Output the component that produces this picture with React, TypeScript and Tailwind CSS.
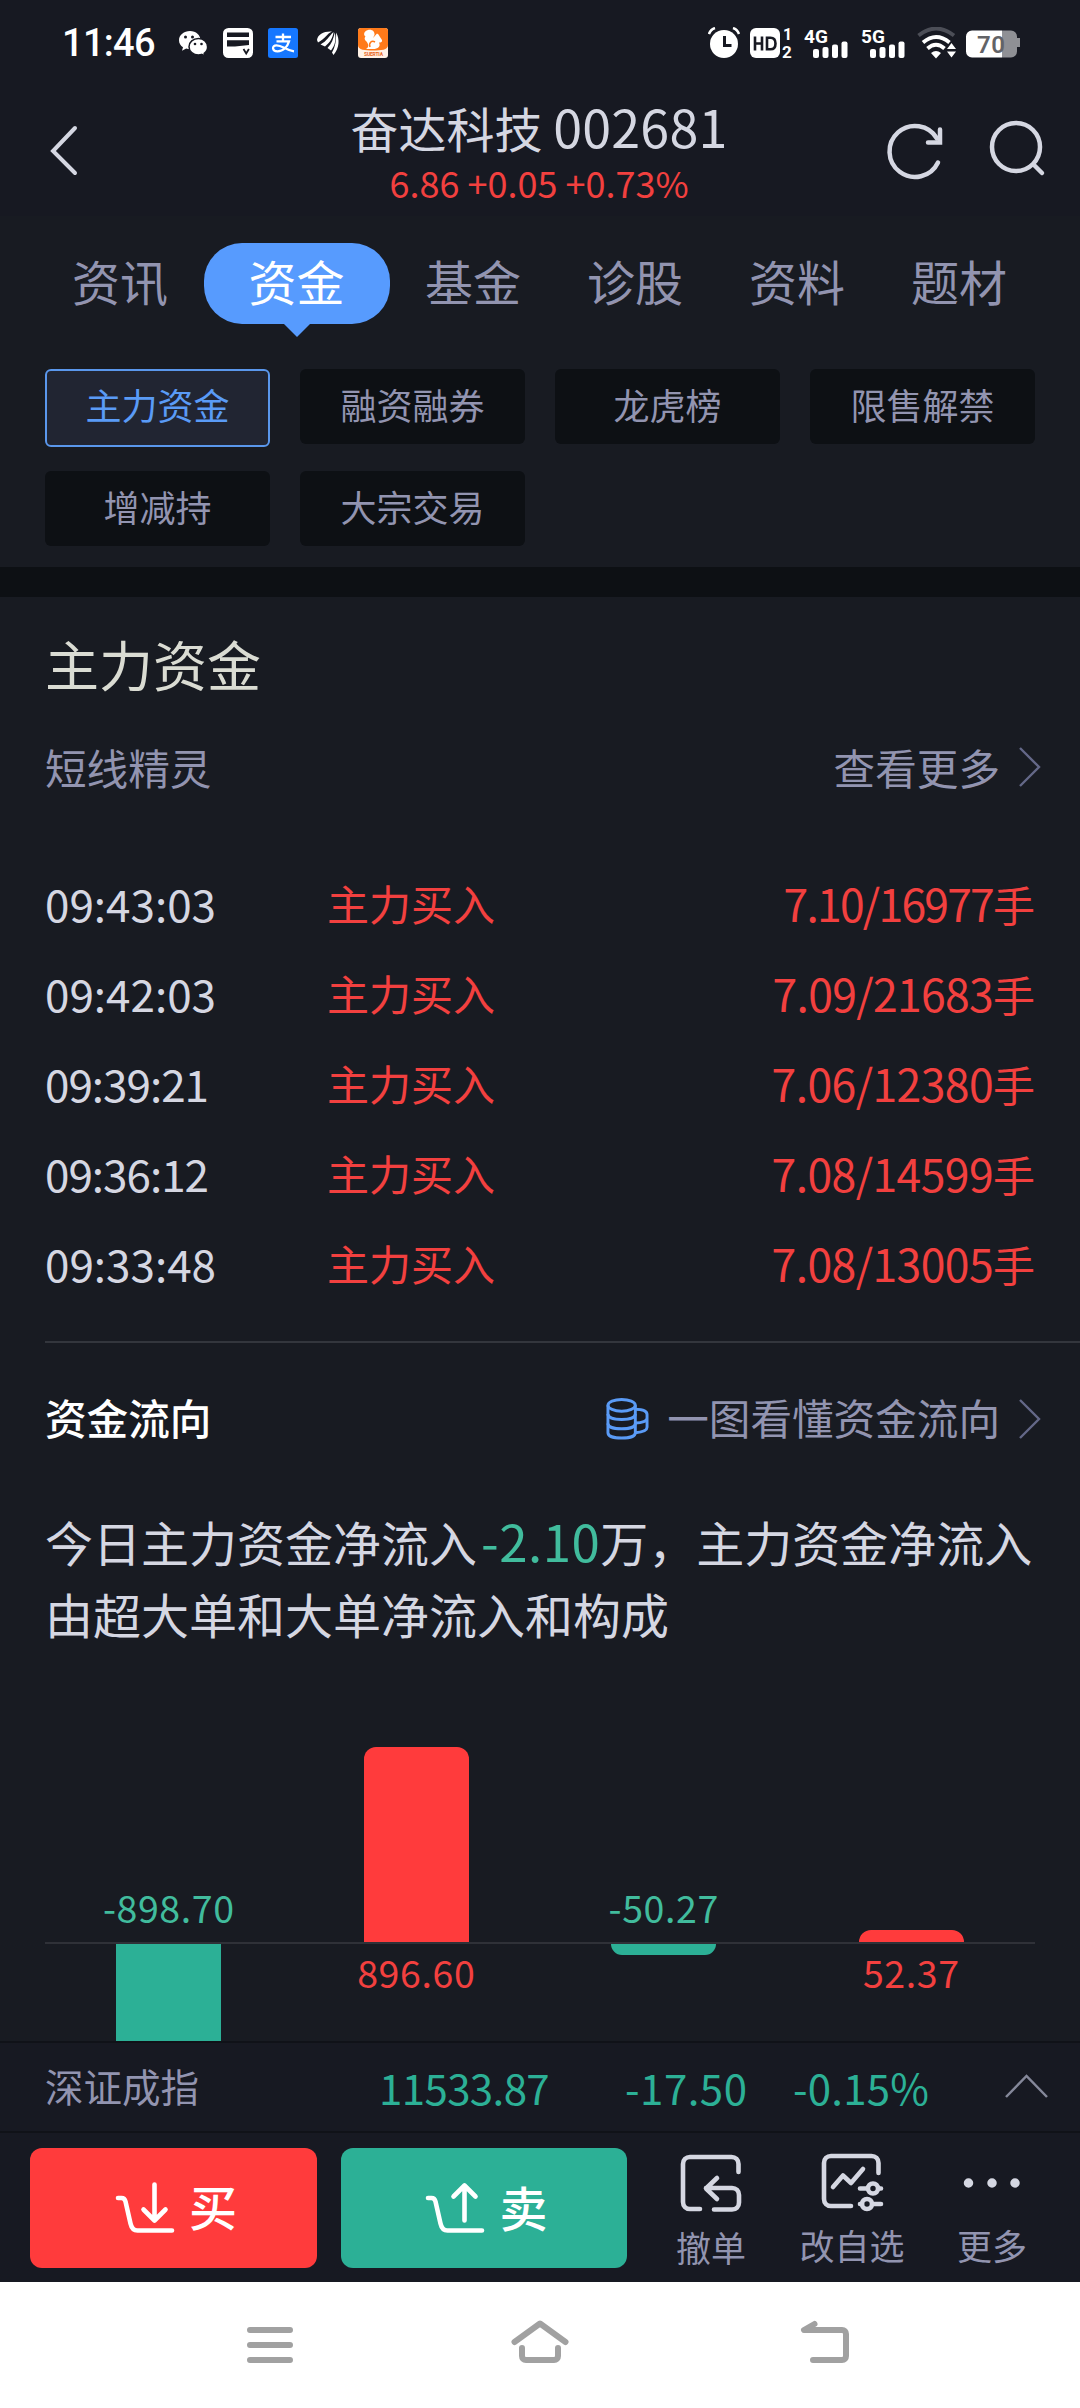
import type { ReactNode } from "react";

type Tone = "up" | "down";

const tabs = ["资讯", "资金", "基金", "诊股", "资料", "题材"];
const filters = ["主力资金", "融资融券", "龙虎榜", "限售解禁", "增减持", "大宗交易"];

const trades = [
  { time: "09:43:03", deal: "7.10/16977", timeSpacing: "", dealSpacing: "tracking-[-1.8px]" },
  { time: "09:42:03", deal: "7.09/21683", timeSpacing: "", dealSpacing: "tracking-[-0.7px]" },
  { time: "09:39:21", deal: "7.06/12380", timeSpacing: "tracking-[-1px]", dealSpacing: "tracking-[-0.6px]" },
  { time: "09:36:12", deal: "7.08/14599", timeSpacing: "tracking-[-1px]", dealSpacing: "tracking-[-0.6px]" },
  { time: "09:33:48", deal: "7.08/13005", timeSpacing: "", dealSpacing: "tracking-[-0.6px]" },
];

const flows: { value: string; height: number; tone: Tone }[] = [
  { value: "-898.70", height: 194, tone: "down" },
  { value: "896.60", height: 195, tone: "up" },
  { value: "-50.27", height: 11, tone: "down" },
  { value: "52.37", height: 12, tone: "up" },
];

function Signal({ label }: { label: string }) {
  return (
    <svg className="font-[Roboto]" width="46" height="40" viewBox="0 -4 46 40" fill="#fff">
      <text x="0" y="15.5" fontSize="19" fontWeight="700" textLength="24">
        {label}
      </text>
      <rect x="9" y="22" width="6" height="9" rx="2" />
      <rect x="18.500" y="20" width="6" height="11" rx="2" />
      <rect x="28" y="17.500" width="6" height="13.500" rx="2" />
      <rect x="37.500" y="14.500" width="6" height="16.500" rx="2" />
    </svg>
  );
}

function StatusBar() {
  return (
    <div className="flex h-[86px] items-center pl-[62px] text-white">
      <span className="w-[117px] font-[Roboto] text-[38px] leading-none font-medium tracking-[-0.7px]">11:46</span>
      {/* WeChat */}
      <svg width="44" height="30" viewBox="0 0 44 30">
        <path d="M11 3C5 3 0 7 0 12.200c0 3 1.600 5.400 4 7l-1 3.600 4.200-2.200c1.200.4 2.500.6 3.800.6 6 0 10.500-4 10.500-9S17 3 11 3z" fill="#fff" />
        <path d="M19.500 10.500c-5.400 0-9.500 3.600-9.500 8.200s4.100 8.200 9.500 8.200c1.100 0 2.200-.2 3.200-.5l3.400 1.800-.9-2.900c2.100-1.500 3.400-3.800 3.400-6.400 0-4.800-3.900-8.400-9.100-8.400z" fill="#fff" stroke="#171922" strokeWidth="1.500" />
        <g fill="#171922">
          <circle cx="6.500" cy="9" r="1.500" />
          <circle cx="13.500" cy="9" r="1.500" />
          <circle cx="16" cy="16" r="1.300" />
          <circle cx="22.500" cy="16" r="1.300" />
        </g>
      </svg>
      {/* Card wallet */}
      <svg width="45" height="30" viewBox="0 0 45 30">
        <rect width="30" height="30" rx="5.500" fill="#fff" />
        <rect x="4" y="4.500" width="22" height="4.500" fill="#171922" />
        <path d="M4 12.300h22v4.700l-14 1.500H4z" fill="#171922" />
        <path d="M20.500 21l2.700 4.500 2.700-4.500" stroke="#171922" strokeWidth="1.800" fill="none" />
      </svg>
      {/* Alipay */}
      <svg width="49" height="30" viewBox="0 0 49 30" fill="none" stroke="#fff" strokeWidth="2.300">
        <rect width="30" height="30" rx="2.500" fill="#1677ff" stroke="none" />
        <path d="M7.500 9h15.500M15 5.500v8M8.500 13.300h12.500c-1.500 5-5.500 10-11.500 10-5.500 0-6-6-1-6 6 0 9 5 17.500 6" />
      </svg>
      {/* Feather */}
      <svg width="41" height="30" viewBox="0 0 41 30" fill="#fff">
        <path d="M0 12C1 6 7 3 15 3.500 10 5.500 8 11 1 14.500z" />
        <path d="M3.500 16.500C10 13 12 8 16.500 4c-.5 6-4 11-8.500 14.500z" />
        <path d="M10.500 20c4-4 6-9 7.200-15.500 1.800 7 .3 13-3.700 18z" />
        <path d="M15 24.500c3-5 4.500-12 4-20C23 11 22.500 20 16.500 27z" />
      </svg>
      {/* UC browser */}
      <svg className="font-[Roboto]" width="350" height="30" viewBox="0 0 350 30">
        <rect width="30" height="30" rx="3" fill="#fff1e6" />
        <path d="M3 0h24a3 3 0 0 1 3 3v14c0 5-7 5.500-15 5.500S0 22 0 17V3a3 3 0 0 1 3-3z" fill="#ff7a1a" />
        <path d="M10 2c4-1 7 1.500 6.500 5L15 10l4-4.500 1.500 1L22 9l2 3c.5 2-1 2.500-3 2.500 2 4-1 6.500-6 6.500H8c3.500-2 2.500-5 .5-7.500C6 11 6.500 10 7.500 8.500 5 7 6 3 10 2z" fill="#fff" />
        <path d="M12 19c-1.500-4 1.500-7 5-5" stroke="#ff7a1a" strokeWidth="1.500" fill="none" />
        <text x="6" y="28" fontSize="5" fontWeight="700" fill="#e8641a" textLength="19">
          SUERTIA
        </text>
      </svg>
      {/* Alarm */}
      <svg width="42" height="32" viewBox="0 0 42 32">
        <circle cx="16" cy="17" r="14" fill="#fff" />
        <path d="M1 7c1-3 3-5 6-6M31 7c-1-3-3-5-6-6" stroke="#fff" strokeWidth="2.500" fill="none" />
        <path d="M16.500 9v9.500h7" stroke="#171922" strokeWidth="3" fill="none" />
      </svg>
      {/* HD dual sim */}
      <svg className="font-[Roboto]" width="54" height="40" viewBox="0 -4 54 40" fill="#fff">
        <rect y="1" width="30" height="30" rx="6" />
        <path d="M5 9.500v14M12 9.500v14M5 16.500h7M17 10.700v11.600h3.500q5 0 5-5.800t-5-5.800z" fill="none" stroke="#171922" strokeWidth="2.600" />
        <text x="33" y="13" fontSize="16" fontWeight="700">1</text>
        <text x="32" y="31" fontSize="17" fontWeight="700">2</text>
      </svg>
      <Signal label="4G" />
      <span className="w-[11px]" />
      <Signal label="5G" />
      <span className="w-[10px]" />
      {/* Wifi */}
      <svg width="49" height="32" viewBox="0 0 49 32" fill="none" strokeWidth="3.800">
        <path d="M1.500 8.500Q19-5.500 37 8.500" stroke="#4c4e57" />
        <path d="M6 15.500Q19 4.500 32.500 15.500M10.500 21.500Q19 14 27.500 21.500" stroke="#fff" />
        <path d="M14 26q5-4 10 0l-5 5.500zM30 22l4.500-6 4.500 6zM30 24.500l4.500 6 4.500-6z" fill="#fff" />
      </svg>
      {/* Battery */}
      <svg className="font-[Roboto]" width="54" height="32" viewBox="0 0 54 32">
        <path d="M36 3.500h9a6 6 0 0 1 6 6v1.500h3v9h-3v4.500a6 6 0 0 1-6 6h-9z" fill="#8f9095" />
        <path d="M6 3.500h30v27H6a6 6 0 0 1-6-6v-15a6 6 0 0 1 6-6z" fill="#fff" />
        <text x="11" y="25.500" fontSize="24" fontWeight="600" fill="#626367" textLength="28">
          70
        </text>
      </svg>
    </div>
  );
}

function Header() {
  return (
    <header className="flex h-[130px] bg-[#171922] text-[#d5d7e2]">
      <svg className="mt-[38px] ml-[49px]" width="30" height="54" viewBox="0 0 30 54" fill="none" stroke="currentColor" strokeWidth="4" strokeLinecap="round">
        <path d="M26 4L4 27l22 22" />
      </svg>
      <div className="ml-[150px] flex w-[620px] flex-col items-center pt-[10px]">
        <h1 className="text-[48px] leading-[60px] whitespace-nowrap">
          奋达科技 <span className="text-[52px] tracking-[0.2px]">002681</span>
        </h1>
        <p className="mt-[5px] text-[36px] leading-10 text-[#f2403f]">6.86 +0.05 +0.73%</p>
      </div>
      <svg className="mt-[34px] ml-[37px]" width="60" height="62" viewBox="0 0 60 62" fill="none" stroke="currentColor" strokeWidth="4.500" strokeLinecap="round">
        <path d="M52 42.500A25.500 25.500 0 1 1 51 18.500" />
        <path d="M54 9.500v13H42" />
      </svg>
      <svg className="mt-[34px] ml-[42px]" width="60" height="62" viewBox="0 0 60 62" fill="none" stroke="currentColor" strokeWidth="4.500" strokeLinecap="round">
        <circle cx="28" cy="27" r="24" />
        <path d="M46 45l8 8" />
      </svg>
    </header>
  );
}

function Tabs() {
  return (
    <nav className="flex h-[126px] pt-[27px] pl-[39px] text-[48px] leading-[75px] text-[#9294b0]">
      {tabs.map((tab) =>
        tab === "资金" ? (
          <div key={tab} className="mx-[2.5px] flex w-[186px] shrink-0 flex-col items-center">
            <span className="h-[81px] w-full rounded-[38px] bg-[#579bfe] text-center text-white">{tab}</span>
            <svg width="26" height="13" viewBox="0 0 26 13" fill="#579bfe">
              <path d="M0 0h26L13 13z" />
            </svg>
          </div>
        ) : (
          <span key={tab} className="w-[162px] shrink-0 text-center">
            {tab}
          </span>
        ),
      )}
    </nav>
  );
}

function Filters() {
  return (
    <div className="grid h-[198px] grid-cols-[repeat(4,225px)] grid-rows-[75px_75px] gap-x-[30px] gap-y-[27px] pt-[27px] pl-[45px] text-center text-[36px] leading-[70px]">
      {filters.map((name, i) => (
        <span
          key={name}
          className={
            i === 0
              ? "h-[78px] rounded-md border-2 border-[#5a97ec] bg-[#212532] leading-[67px] text-[#5a9bf6]"
              : "h-[75px] rounded-md bg-[#0d1014] text-[#9294b0]"
          }
        >
          {name}
        </span>
      ))}
    </div>
  );
}

function Chevron() {
  return (
    <svg className="ml-[18px]" width="24" height="42" viewBox="0 0 24 42" fill="none" stroke="#646888" strokeWidth="2.400">
      <path d="M2 2l19 19L2 40" />
    </svg>
  );
}

function CoinsIcon() {
  return (
    <svg className="mr-[18px]" width="43" height="44" viewBox="0 0 44 44" fill="none" stroke="#5a9bf6" strokeWidth="3">
      <ellipse cx="16" cy="8" rx="14" ry="6" />
      <path d="M2 8v28c0 3.500 6 5.500 14 5.500s14-2 14-5.500V8" />
      <path d="M2 17c0 3.500 6 5.500 14 5.500s14-2 14-5.500M2 26.500c0 3.500 6 5.500 14 5.500s14-2 14-5.500" />
      <path d="M30 12c7 0 12 2 12 5.500v13c0 3-5 5-12 5.500M42 21c0 3-5 5-12 5" />
    </svg>
  );
}

function Trades() {
  return (
    <ul className="pt-[61px] text-[42px] leading-[90px]">
      {trades.map((row) => (
        <li key={row.time} className="flex h-[90px] pr-[45px]">
          <span className={`w-[282px] text-[44px] text-[#d5d7e2] ${row.timeSpacing}`}>{row.time}</span>
          <span className="text-[#f2403f]">主力买入</span>
          <span className="ml-auto text-[#f2403f]">
            <span className={`text-[44.500px] ${row.dealSpacing}`}>{row.deal}</span>手
          </span>
        </li>
      ))}
    </ul>
  );
}

function FlowChart() {
  return (
    <div className="mr-[45px] text-[37.500px] leading-[44px] tracking-[0.6px]">
      <div className="grid h-[295px] grid-cols-4 items-end justify-items-center border-b-2 border-[#2f3138]">
        {flows.map((f) =>
          f.tone === "down" ? (
            <span key={f.value} className="pb-[13px] text-[#41bc9d]">
              {f.value}
            </span>
          ) : (
            <div key={f.value} className="w-[105px] rounded-t-[12px] bg-[#ff3b3c]" style={{ height: f.height }} />
          ),
        )}
      </div>
      <div className="grid grid-cols-4 items-start justify-items-center">
        {flows.map((f) =>
          f.tone === "down" ? (
            <div key={f.value} className="w-[105px] rounded-b-[12px] bg-[#2cb096]" style={{ height: f.height }} />
          ) : (
            <span key={f.value} className="pt-[6px] text-[#f2403f]">
              {f.value}
            </span>
          ),
        )}
      </div>
    </div>
  );
}

function IndexRow() {
  return (
    <div className="flex h-[92px] items-center border-y-2 border-[#101218] pb-[2px] pl-[45px] text-[42px] text-[#2cb096]">
      <span className="w-[334px] text-[38.500px] text-[#9294b0]">深证成指</span>
      <span className="w-[246px] tracking-[-0.6px]">11533.87</span>
      <span className="w-[168px] tracking-[0.5px]">-17.50</span>
      <span className="w-[211px] tracking-[0.2px]">-0.15%</span>
      <svg width="44" height="26" viewBox="0 0 44 26" fill="none" stroke="#85889a" strokeWidth="2.500">
        <path d="M2 24L22.500 3 43 24" />
      </svg>
    </div>
  );
}

function Cart({ arrow }: { arrow: string }) {
  return (
    <svg className="mr-[14px]" width="60" height="52" viewBox="0 0 60 52" fill="none" stroke="#fff" strokeWidth="4.600" strokeLinecap="round" strokeLinejoin="round">
      <path d="M3 16h3.500c2.500 0 3.500 1.500 4 3.500l5 22c1 4.500 3 7 7 7H57" />
      <path d={arrow} />
    </svg>
  );
}

function Action({ label, width, children }: { label: string; width: string; children: ReactNode }) {
  return (
    <div className={`flex flex-col items-center ${width}`}>
      <svg width="66" height="60" viewBox="0 0 66 60" fill="none" stroke="#d5d7e2" strokeWidth="4.600" strokeLinecap="round" strokeLinejoin="round">
        {children}
      </svg>
      <span className="mt-[11px] text-[35px] leading-[44px] whitespace-nowrap text-[#9294b0]">{label}</span>
    </div>
  );
}

function ActionBar() {
  return (
    <div className="flex h-[149px] pt-[15px] pl-[30px] text-[48px] leading-none text-white">
      <div className="flex h-[120px] w-[287px] items-center justify-center rounded-[12px] bg-[#ff3b3c] pl-[5px]">
        <Cart arrow="M39.500 2.500v35M28.500 27.500l11 11 11-11" />
        <span className="pb-[6px] font-medium">买</span>
      </div>
      <div className="ml-[24px] flex h-[120px] w-[286px] items-center justify-center rounded-[12px] bg-[#2cb096] pl-[5px]">
        <Cart arrow="M39.500 38.500v-35M28.500 14.500l11-11 11 11" />
        <span className="pb-[4px] font-medium">卖</span>
      </div>
      <div className="flex pt-[4px] pl-[40px]">
        <div className="pt-[2px]">
          <Action label="撤单" width="w-[88px]">
            <path d="M60.500 18V10c0-4-3-7-7-7H12c-4 0-7 3-7 7v38c0 4 3 7 7 7h10" />
            <path d="M36 55.500h18c4 0 7-3 7-7V41c0-4-3-7-7-7H28M39 24L28 34.500 39 45" />
          </Action>
        </div>
        <Action label="改自选" width="w-[194px]">
          <path d="M59.500 21V11c0-4-3-7-7-7H12c-4 0-7 3-7 7v36c0 4 3 7 7 7h20" />
          <path d="M14 35l10-11.500 8 7.500 12-14" />
          <path d="M41 36.500h6M60 36.500h2M41 52h2M55 52h7" />
          <circle cx="54" cy="36.500" r="5" />
          <circle cx="48" cy="52" r="5" />
        </Action>
        <Action label="更多" width="w-[86px]">
          <path d="M9.500 31h.01M33 31h.01M56 31h.01" strokeWidth="9.500" />
        </Action>
      </div>
    </div>
  );
}

function NavBar() {
  return (
    <div className="flex h-[126px] items-center bg-white pl-[246px]">
      <svg width="48" height="46" viewBox="0 0 48 46" stroke="#a1a1a1" strokeWidth="6" strokeLinecap="round">
        <path d="M4 8h40M4 23h40M4 38h40" />
      </svg>
      <svg className="ml-[216px] overflow-visible" width="60" height="46" viewBox="0 0 60 46" fill="none" stroke="#a1a1a1" strokeWidth="6" strokeLinecap="round" strokeLinejoin="round">
        <path d="M4.500 20L30 1.500 55.500 20M12 26v8c0 2.500 1.500 4 4 4h28c2.500 0 4-1.500 4-4v-8" />
      </svg>
      <svg className="ml-[229px] overflow-visible" width="52" height="46" viewBox="0 0 52 46" fill="none" stroke="#a1a1a1" strokeWidth="6" strokeLinecap="round" strokeLinejoin="round">
        <path d="M15.500 2L5 8h38c2.500 0 4 1.500 4 4v22c0 2.500-1.500 4-4 4H14" />
      </svg>
    </div>
  );
}

export default function App() {
  return (
    <div className="flex h-[2408px] w-[1080px] flex-col overflow-hidden bg-[#171922] font-['Noto_Sans_CJK_SC',sans-serif]">
      <StatusBar />
      <Header />
      <div className="bg-[#181b22]">
        <Tabs />
        <Filters />
        <div className="mt-[27px] h-[30px] bg-[#0d1014]" />
      </div>

      <main className="h-[1444px] overflow-hidden bg-[#181b22] pl-[45px]">
        <h2 className="pt-[27px] text-[54px] leading-[80px] text-[#dadcd3]">主力资金</h2>
        <div className="mt-[33px] flex h-[60px] items-center pr-[38px] text-[41.600px] leading-[60px] text-[#9294b0]">
          <span className="mr-auto">短线精灵</span>
          <span>查看更多</span>
          <Chevron />
        </div>
        <Trades />

        <div className="mt-[33px] h-[2px] bg-[#33363d]" />
        <div className="mt-[46px] flex h-[60px] items-center pr-[38px] text-[41.600px] leading-[60px] text-[#9294b0]">
          <span className="mr-auto pb-[5px] font-medium text-white">资金流向</span>
          <CoinsIcon />
          <span className="pb-[5px]">一图看懂资金流向</span>
          <Chevron />
        </div>
        <p className="mt-[55px] text-[48px] leading-[72px] whitespace-nowrap text-[#d5d7e2]">
          今日主力资金净流入<span className="ml-[4px] text-[51px] tracking-[0.5px] text-[#41bc9d]">-2.10</span>万，主力资金净流入
          <br />
          由超大单和大单净流入和构成
        </p>
        <FlowChart />
      </main>

      <IndexRow />
      <ActionBar />
      <NavBar />
    </div>
  );
}
